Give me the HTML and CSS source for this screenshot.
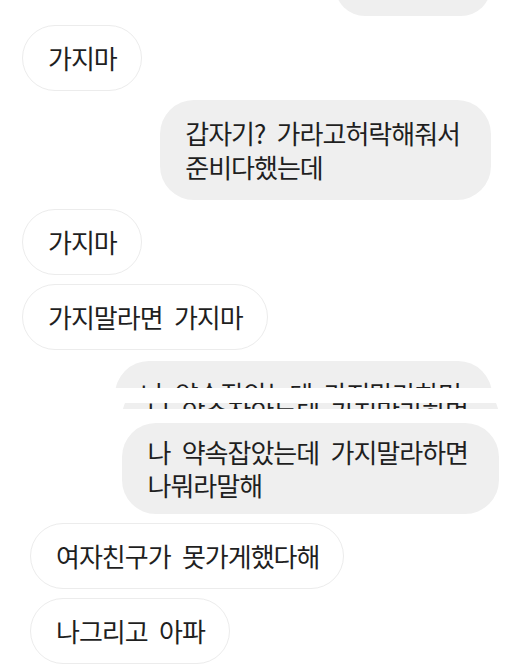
FILE: index.html
```html
<!DOCTYPE html>
<html lang="ko">

<head>
    <meta charset="UTF-8" />
    <title>대화</title>
    <link rel="stylesheet" href="styles.css">
</head>

<body>
    <div class="chat">
        <!-- 위쪽 캡처 -->
        <div class="part part-upper">
            <div class="row right"><div class="bubble mine cut-top">&nbsp;</div></div>
            <div class="row"><div class="bubble theirs">가지마</div></div>
            <div class="row right"><div class="bubble mine">갑자기? 가라고허락해줘서<br>준비다했는데</div></div>
            <div class="row"><div class="bubble theirs">가지마</div></div>
            <div class="row"><div class="bubble theirs">가지말라면 가지마</div></div>
            <div class="row right slice slice-top" aria-hidden="true">
                <div class="bubble mine">나 약속잡았는데 가지말라하면<br>나뭐라말해</div>
            </div>
        </div>

        <!-- 아래쪽 캡처 -->
        <div class="part part-lower">
            <div class="row right slice slice-mid" aria-hidden="true">
                <div class="bubble mine lower">나 약속잡았는데 가지말라하면<br>나뭐라말해</div>
            </div>
            <div class="row right"><div class="bubble mine lower">나 약속잡았는데 가지말라하면<br>나뭐라말해</div></div>
            <div class="row"><div class="bubble theirs">여자친구가 못가게했다해</div></div>
            <div class="row"><div class="bubble theirs">나그리고 아파</div></div>
        </div>
    </div>
</body>

</html>
```

FILE: styles.css
```css
/* 기본 */
body {
    margin: 0;
    background: #fff;
    font-family: "Noto Sans CJK KR", "Noto Sans", sans-serif;
    color: #1f1f1f;
    overflow: hidden;
}

.chat {
    width: 507px;
    height: 666px;
    overflow: hidden;
}

.part {
    display: flex;
    flex-direction: column;
    gap: 9px;
}

.part-upper {
    padding: 0 16px 0 22px;
}

.part-lower {
    padding: 0 8px 0 30px;
}

.row {
    display: flex;
}

.row.right {
    justify-content: flex-end;
}

/* 말풍선 */
.bubble {
    font-size: 26px;
    letter-spacing: -1px;
    word-spacing: 5px;
    line-height: 34px;
    padding: 16px 25px;
    border-radius: 34px;
    white-space: nowrap;
}

.bubble.theirs {
    background: #fff;
    border: 1px solid #ececec;
    padding: 15px 24px 15px 25px;
}

.bubble.mine {
    background: #efefef;
    padding-right: 31px;
}

.bubble.cut-top {
    width: 100px;
    height: 28px;
    margin-top: -44px;
}

.bubble.lower {
    line-height: 33px;
    padding: 12px 31px 13px 25px;
}

/* 깨진 부분 */
.slice {
    overflow: hidden;
    align-items: flex-start;
}

.slice-top {
    height: 27px;
    margin-top: 2px;
    margin-right: -1px;
}

.slice-mid {
    height: 6px;
    margin-top: 15px;
    margin-bottom: 5px;
}

.slice-mid .bubble {
    margin-top: -20px;
}
```
